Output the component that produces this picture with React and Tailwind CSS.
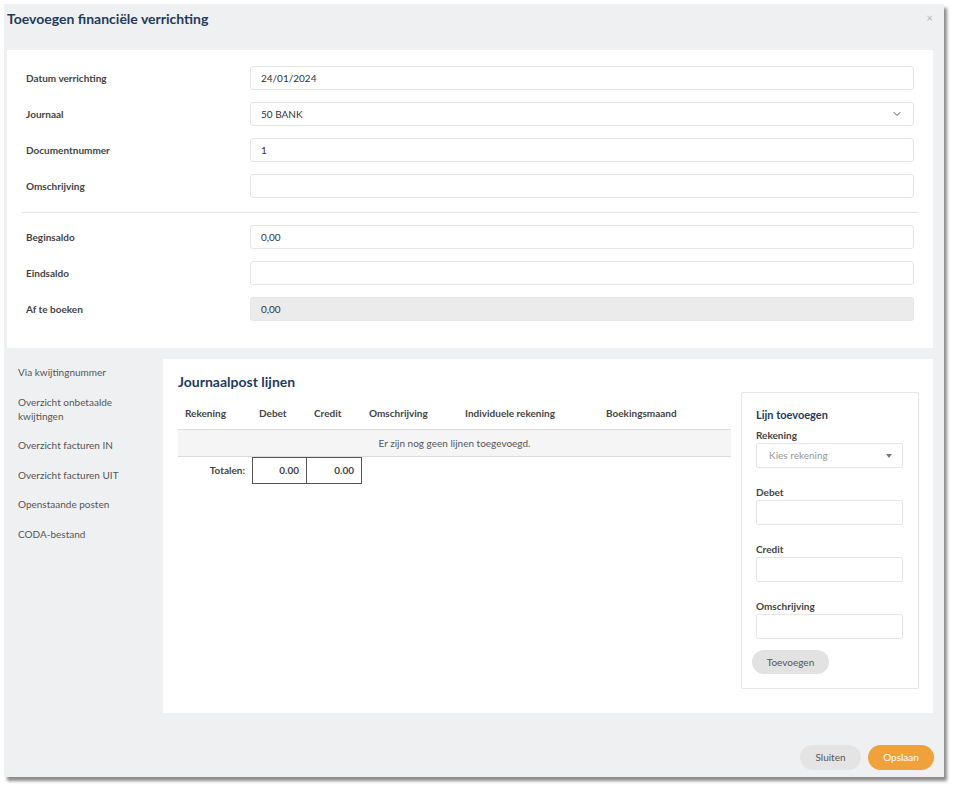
import { ChevronDown } from 'lucide-react';

const font = { fontFamily: 'Lato, "Noto Sans", sans-serif' };

function FormRow({ label, value, grey, select }) {
  return (
    <div className="flex items-center h-[24px]">
      <label className="w-[224px] text-[10px] font-bold text-[#444]">{label}</label>
      <div
        className={`flex-1 h-[24px] flex items-center justify-between px-[10px] border border-[#e6e6e6] rounded-[3px] text-[10px] text-[#333] ${
          grey ? 'bg-[#ebebeb]' : 'bg-white'
        }`}
      >
        <span>{value}</span>
        {select && <ChevronDown size={12} strokeWidth={2} className="text-[#555]" />}
      </div>
    </div>
  );
}

function SideField({ label, children }) {
  return (
    <div>
      <div className="text-[10px] font-bold text-[#444] leading-[15px]">{label}</div>
      {children}
    </div>
  );
}

export default function App() {
  const sideLinks = [
    'Via kwijtingnummer',
    'Overzicht onbetaalde kwijtingen',
    'Overzicht facturen IN',
    'Overzicht facturen UIT',
    'Openstaande posten',
    'CODA-bestand',
  ];

  return (
    <div className="bg-white w-[957px] h-[789px] pt-[4px] pl-[4px]" style={font}>
      <div className="relative w-[940px] h-[773px] bg-[#eff0f2] shadow-[3px_4px_3px_rgba(0,0,0,0.45)] flex flex-col pl-[3px] pr-[11px]">
        <button className="absolute right-[11px] top-[6px] text-[11px] text-[#b5b5b5]">×</button>
        <h1 className="h-[46px] pt-[4px] text-[14px] font-bold text-[#1f3b5c]">
          Toevoegen financiële verrichting
        </h1>

        <div className="bg-white h-[298px] pt-[16px] pl-[19px] pr-[19px]">
          <div className="flex flex-col gap-[12px]">
            <FormRow label="Datum verrichting" value="24/01/2024" />
            <FormRow label="Journaal" value="50 BANK" select />
            <FormRow label="Documentnummer" value="1" />
            <FormRow label="Omschrijving" value="" />
          </div>
          <div className="h-px bg-[#e6e6e6] -mx-[4px] mt-[14px] mb-[12px]" />
          <div className="flex flex-col gap-[12px]">
            <FormRow label="Beginsaldo" value="0,00" />
            <FormRow label="Eindsaldo" value="" />
            <FormRow label="Af te boeken" value="0,00" grey />
          </div>
        </div>

        <div className="flex gap-[3px] mt-[11px]">
          <ul className="w-[153px] pl-[11px] pt-[6px] flex flex-col gap-[15.6px] text-[10px] text-[#555] leading-[14px]">
            {sideLinks.map((l) => (
              <li key={l} className="pr-[20px]">{l}</li>
            ))}
          </ul>

          <div className="flex-1 bg-white h-[354px] pl-[15px] pr-[14px] pt-[14px] flex gap-[10px]">
            <div className="w-[553px]">
              <h2 className="text-[14px] font-bold text-[#1f3b5c] h-[25px] leading-[18px]">
                Journaalpost lijnen
              </h2>
              <div className="flex items-center h-[31px] text-[10px] font-bold text-[#444]">
                <span className="w-[74px] pl-[7px]">Rekening</span>
                <span className="w-[55px] pl-[7px]">Debet</span>
                <span className="w-[55px] pl-[7px]">Credit</span>
                <span className="w-[96px] pl-[7px]">Omschrijving</span>
                <span className="w-[141px] pl-[7px]">Individuele rekening</span>
                <span className="pl-[7px]">Boekingsmaand</span>
              </div>
              <div className="h-[28px] bg-[#f5f5f5] border-y border-[#dcdcdc] flex items-center justify-center text-[10px] text-[#555]">
                Er zijn nog geen lijnen toegevoegd.
              </div>
              <div className="flex h-[27px] text-[10px] text-[#444]">
                <span className="w-[74px] flex items-center justify-end pr-[7px] font-bold">Totalen:</span>
                <span className="w-[55px] border border-[#555] flex items-center justify-end pr-[7px] font-bold">0.00</span>
                <span className="w-[55px] border border-l-0 border-[#555] flex items-center justify-end pr-[7px] font-bold">0.00</span>
              </div>
            </div>

            <div className="w-[178px] h-[297px] mt-[19px] border border-[#e6e6e6] rounded-[2px] pl-[14px] pr-[15px] pt-[14px]">
              <h3 className="text-[11px] font-bold text-[#1f3b5c] leading-[15px] mb-[6px]">Lijn toevoegen</h3>
              <div className="flex flex-col gap-[17px]">
                <SideField label="Rekening">
                  <div className="h-[25px] border border-[#e6e6e6] rounded-[2px] flex items-center justify-between pl-[12px] pr-[10px] text-[10px] text-[#999]">
                    <span>Kies rekening</span>
                    <span className="w-0 h-0 border-l-[3px] border-r-[3px] border-t-[4px] border-l-transparent border-r-transparent border-t-[#777]" />
                  </div>
                </SideField>
                <SideField label="Debet">
                  <div className="h-[25px] border border-[#e6e6e6] rounded-[2px]" />
                </SideField>
                <SideField label="Credit">
                  <div className="h-[25px] border border-[#e6e6e6] rounded-[2px]" />
                </SideField>
                <SideField label="Omschrijving">
                  <div className="h-[25px] border border-[#e6e6e6] rounded-[2px]" />
                </SideField>
              </div>
              <button className="mt-[11px] -ml-[4px] h-[24px] w-[77px] rounded-full bg-[#e2e2e2] text-[10px] text-[#555]">
                Toevoegen
              </button>
            </div>
          </div>
        </div>

        <div className="flex-1 flex items-end justify-end gap-[7px] pb-[7px] -mr-[1px]">
          <button className="h-[25px] w-[61px] rounded-full bg-[#e4e4e4] text-[10px] text-[#555]">Sluiten</button>
          <button className="h-[25px] w-[66px] rounded-full bg-[#f0a13b] text-[10px] text-white">Opslaan</button>
        </div>
      </div>
    </div>
  );
}
